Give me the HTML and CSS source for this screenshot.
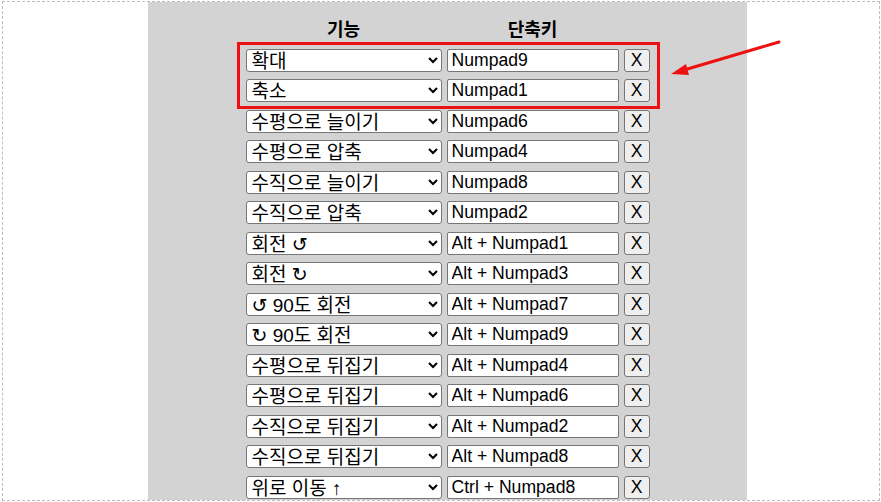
FILE: index.html
```html
<!DOCTYPE html>
<html lang="ko">
<head>
  <meta charset="UTF-8" />
  <meta name="viewport" content="width=device-width, initial-scale=1" />
  <title>단축키 설정</title>
  <link rel="stylesheet" href="styles.css">
</head>
<body>

  <div class="frame">
    <div class="panel">
      <div class="keymap" id="keymap">
        <div class="head">기능</div>
        <div class="head">단축키</div>
        <div class="head"></div>
      </div>
    </div>
  </div>

  <!-- annotation drawn over the screenshot -->
  <svg class="markup" width="881" height="502" viewBox="0 0 881 502">
    <rect x="238.5" y="43.5" width="420" height="64" fill="none" stroke="#ee1111" stroke-width="3" />
    <line x1="779" y1="42" x2="684" y2="70" stroke="#ee1111" stroke-width="3" stroke-linecap="round" />
    <polygon points="671,74 686,64 689,75" fill="#ee1111" />
  </svg>

  <script>
    const functions = [
      '확대', '축소',
      '수평으로 늘이기', '수평으로 압축',
      '수직으로 늘이기', '수직으로 압축',
      '회전 ↺', '회전 ↻',
      '↺ 90도 회전', '↻ 90도 회전',
      '수평으로 뒤집기', '수직으로 뒤집기',
      '위로 이동 ↑'
    ];

    const bindings = [
      ['확대', 'Numpad9'],
      ['축소', 'Numpad1'],
      ['수평으로 늘이기', 'Numpad6'],
      ['수평으로 압축', 'Numpad4'],
      ['수직으로 늘이기', 'Numpad8'],
      ['수직으로 압축', 'Numpad2'],
      ['회전 ↺', 'Alt + Numpad1'],
      ['회전 ↻', 'Alt + Numpad3'],
      ['↺ 90도 회전', 'Alt + Numpad7'],
      ['↻ 90도 회전', 'Alt + Numpad9'],
      ['수평으로 뒤집기', 'Alt + Numpad4'],
      ['수평으로 뒤집기', 'Alt + Numpad6'],
      ['수직으로 뒤집기', 'Alt + Numpad2'],
      ['수직으로 뒤집기', 'Alt + Numpad8'],
      ['위로 이동 ↑', 'Ctrl + Numpad8']
    ];

    const keymap = document.getElementById('keymap');

    bindings.forEach(([name, key]) => {
      const select = document.createElement('select');
      select.className = 'func';
      functions.forEach(f => {
        const opt = document.createElement('option');
        opt.textContent = f;
        if (f === name) opt.selected = true;
        select.appendChild(opt);
      });

      const input = document.createElement('input');
      input.type = 'text';
      input.className = 'key';
      input.value = key;

      const del = document.createElement('button');
      del.className = 'remove';
      del.textContent = 'X';
      del.onclick = () => {
        select.remove();
        input.remove();
        del.remove();
      };

      keymap.append(select, input, del);
    });
  </script>
</body>
</html>
```

FILE: styles.css
```css
* {
  box-sizing: border-box;
  margin: 0;
  padding: 0;
}

body {
  font-family: 'Liberation Sans', 'Noto Sans CJK KR', 'DejaVu Sans', sans-serif;
  font-size: 17.6px;
  background: #fff;
  color: #000;
  width: 881px;
  height: 502px;
  padding: 1px 1px 1px 2px;
  position: relative;
  overflow: hidden;
}

.frame {
  height: 500px;
  border: 1px dashed #bdbdbd;
  display: flex;
}

.panel {
  width: 599px;
  margin-left: 145px;
  background: #d3d3d3;
  padding-top: 13px;
}

.keymap {
  display: grid;
  grid-template-columns: 196px 172px 26px;
  grid-template-rows: 26px;
  grid-auto-rows: 23px;
  column-gap: 5px;
  row-gap: 7.5px;
  justify-content: center;
}

.head {
  font-size: 18px;
  font-weight: bold;
  text-align: center;
  align-self: center;
}

.func,
.key,
.remove {
  font-family: inherit;
  font-size: 17.6px;
  color: #000;
  height: 23px;
  border: 1px solid #767676;
}

.func {
  font-size: 19px;
  background: #fff;
  border-radius: 3px;
  padding-left: 1px;
}

.key {
  background: #fff;
  border-radius: 2px;
  padding: 0 4px;
}

.remove {
  background: #efefef;
  border-radius: 3px;
  padding: 0;
  cursor: pointer;
}

.remove:hover {
  background: #e5e5e5;
}

.markup {
  position: absolute;
  left: 0;
  top: 0;
  pointer-events: none;
}
```
